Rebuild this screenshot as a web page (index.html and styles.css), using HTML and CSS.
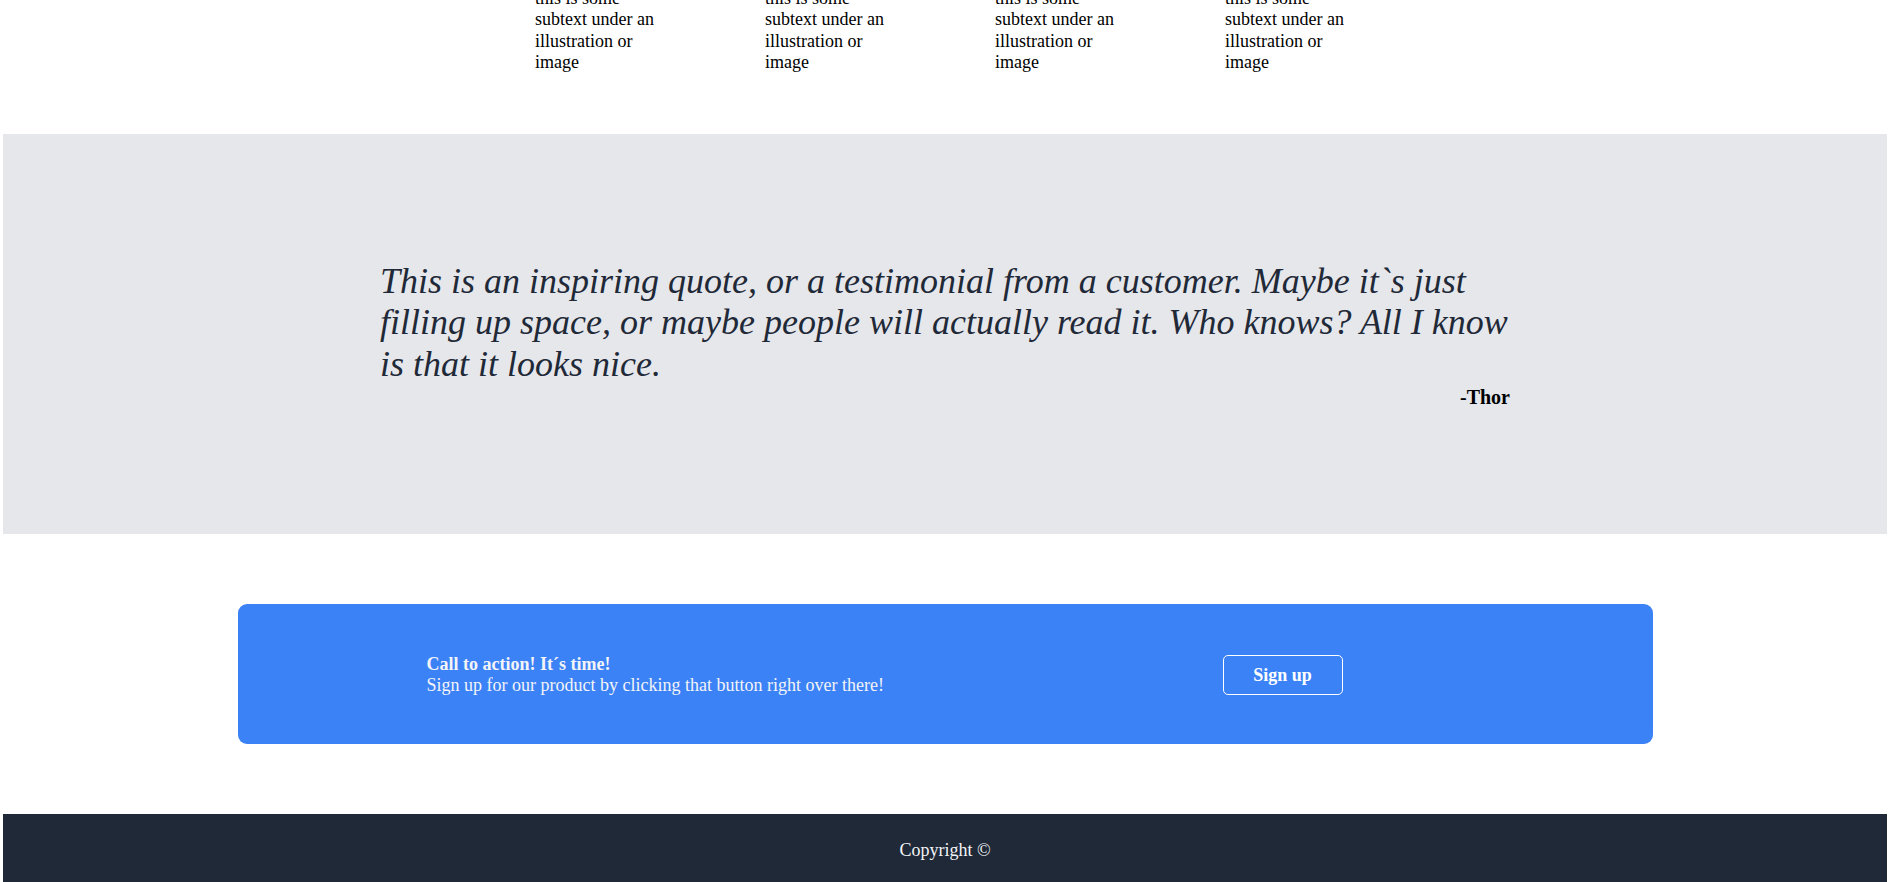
FILE: index.html
```html
<!DOCTYPE html>
<html lang="en">
<head>
<meta charset="utf-8">
<title>Landing page</title>
<link rel="stylesheet" href="styles.css">
</head>
<body>
  <section class="features">
    <div class="feature"><p>this is some subtext under an illustration or image</p></div>
    <div class="feature"><p>this is some subtext under an illustration or image</p></div>
    <div class="feature"><p>this is some subtext under an illustration or image</p></div>
    <div class="feature"><p>this is some subtext under an illustration or image</p></div>
  </section>
  <section class="quote-section">
    <div class="quote">
      <p class="quote-text">This is an inspiring quote, or a testimonial from a customer. Maybe it`s just filling up space, or maybe people will actually read it. Who knows? All I know is that it looks nice.</p>
      <p class="quote-author">-Thor</p>
    </div>
  </section>
  <section class="cta-section">
    <div class="cta">
      <div class="cta-text">
        <p class="cta-title">Call to action! It´s time!</p>
        <p>Sign up for our product by clicking that button right over there!</p>
      </div>
      <button class="cta-button">Sign up</button>
    </div>
  </section>
  <footer class="footer">Copyright ©</footer>
</body>
</html>
```

FILE: styles.css
```css
* { box-sizing: border-box; }
html, body { height: 100%; }
body {
  margin: 0 6px 0 3px;
  font-family: "Liberation Serif", "Times New Roman", serif;
  font-size: 18px;
  line-height: 21px;
  color: #000;
  background: #fff;
}
p { margin: 0; }

.features {
  display: flex;
  justify-content: center;
  gap: 100px;
  margin-top: -12px;
  padding-bottom: 61px;
}
.feature { width: 130px; line-height: 21.3px; }

.quote-section {
  height: 400px;
  background: #e5e7eb;
  display: flex;
  align-items: center;
  justify-content: center;
}
.quote { width: 1130px; }
.quote-text {
  font-size: 36px;
  line-height: 41.7px;
  font-style: italic;
  color: #1f2937;
}
.quote-author {
  text-align: right;
  font-weight: bold;
  font-size: 20px;
  line-height: 21px;
  margin-top: 1px;
}

.cta-section { padding: 70px 0; }
.cta {
  width: 1415px;
  height: 140px;
  margin: 0 auto;
  background: #3b82f6;
  border-radius: 9px;
  display: flex;
  align-items: center;
  justify-content: space-between;
  padding: 2px 310px 0 189px;
  color: #f3f4f6;
}
.cta-title { font-weight: bold; }
.cta-button {
  width: 120px;
  height: 40px;
  background: transparent;
  border: 1px solid #fff;
  border-radius: 5px;
  color: #fff;
  font-family: "Liberation Serif", "Times New Roman", serif;
  font-size: 18px;
  font-weight: bold;
  padding: 0;
}

.footer {
  background: #1f2937;
  color: #f3f4f6;
  text-align: center;
  padding: 26px 0 22px;
  line-height: 20px;
}
```
